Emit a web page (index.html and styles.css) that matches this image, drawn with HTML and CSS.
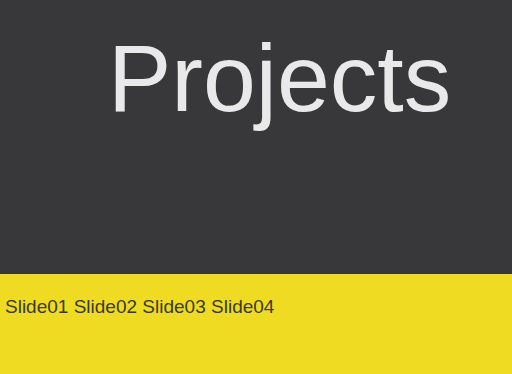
FILE: index.html
```html
<!DOCTYPE html>
<html lang="en">
<head>
  <meta charset="UTF-8">
  <meta name="viewport" content="width=device-width, initial-scale=1.0">
  <title>Projects</title>
  <link rel="stylesheet" href="styles.css">
</head>
<body>
  <header class="hero">
    <h1>Projects</h1>
  </header>
  <nav class="slides">
    <a href="#">Slide01</a>
    <a href="#">Slide02</a>
    <a href="#">Slide03</a>
    <a href="#">Slide04</a>
  </nav>
</body>
</html>
```

FILE: styles.css
```css
body {
  margin: 0;
  font-family: "Liberation Sans", Arial, sans-serif;
  background-color: #efdc22;
}
.hero {
  height: 274px;
  background: #38383a;
  box-sizing: border-box;
  padding: 26px 0 0 108px;
}
h1 {
  margin: 0;
  font-size: 95px;
  font-weight: normal;
  line-height: 1.1;
  color: #e9e9ea;
}
.slides {
  padding: 22px 5px;
  font-size: 19px;
}
.slides a {
  color: #3b3a1e;
  text-decoration: none;
}
```
